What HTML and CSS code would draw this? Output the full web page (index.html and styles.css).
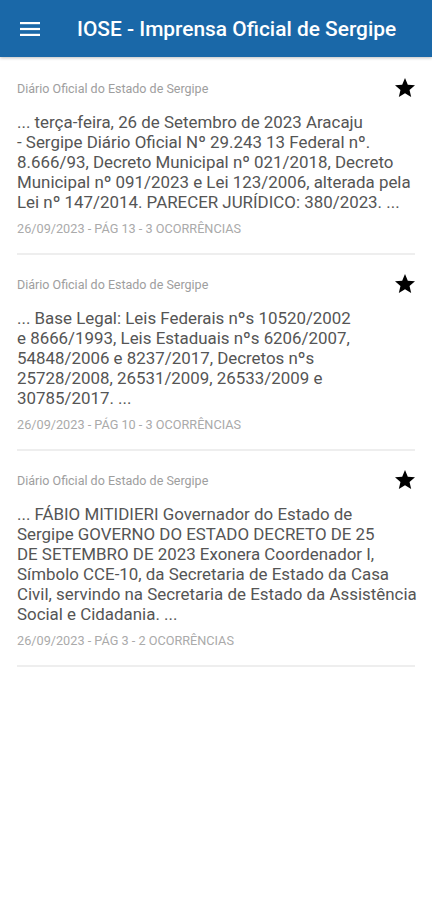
FILE: index.html
```html
<!DOCTYPE html>
<html lang="pt-BR">
<head>
  <meta charset="UTF-8">
  <meta name="viewport" content="width=device-width, initial-scale=1.0">
  <title>IOSE - Imprensa Oficial de Sergipe</title>
  <link rel="stylesheet" href="styles.css">
</head>
<body>
  <header class="app-bar">
    <button class="menu-btn" aria-label="Menu">
      <svg width="20" height="14" viewBox="0 0 20 14">
        <rect x="0" y="0" width="20" height="2.2" fill="#fff"/>
        <rect x="0" y="5.9" width="20" height="2.2" fill="#fff"/>
        <rect x="0" y="11.8" width="20" height="2.2" fill="#fff"/>
      </svg>
    </button>
    <h1 class="app-title">IOSE - Imprensa Oficial de Sergipe</h1>
  </header>

  <main class="results">
    <article class="result">
      <div class="result-head">
        <span class="source">Diário Oficial do Estado de Sergipe</span>
        <svg class="star" width="24" height="24" viewBox="0 0 24 24"><path d="M12 17.27L18.18 21l-1.64-7.03L22 9.24l-7.19-.61L12 2 9.19 8.63 2 9.24l5.46 4.73L5.82 21z"/></svg>
      </div>
      <p class="excerpt">... terça-feira, 26 de Setembro de 2023 Aracaju<br>- Sergipe Diário Oficial Nº 29.243 13 Federal nº.<br>8.666/93, Decreto Municipal nº 021/2018, Decreto<br>Municipal nº 091/2023 e Lei 123/2006, alterada pela<br>Lei nº 147/2014. PARECER JURÍDICO: 380/2023. ...</p>
      <div class="meta">26/09/2023 - Pág 13 - 3 ocorrências</div>
    </article>

    <article class="result">
      <div class="result-head">
        <span class="source">Diário Oficial do Estado de Sergipe</span>
        <svg class="star" width="24" height="24" viewBox="0 0 24 24"><path d="M12 17.27L18.18 21l-1.64-7.03L22 9.24l-7.19-.61L12 2 9.19 8.63 2 9.24l5.46 4.73L5.82 21z"/></svg>
      </div>
      <p class="excerpt">... Base Legal: Leis Federais nºs 10520/2002<br>e 8666/1993, Leis Estaduais nºs 6206/2007,<br>54848/2006 e 8237/2017, Decretos nºs<br>25728/2008, 26531/2009, 26533/2009 e<br>30785/2017. ...</p>
      <div class="meta">26/09/2023 - Pág 10 - 3 ocorrências</div>
    </article>

    <article class="result">
      <div class="result-head">
        <span class="source">Diário Oficial do Estado de Sergipe</span>
        <svg class="star" width="24" height="24" viewBox="0 0 24 24"><path d="M12 17.27L18.18 21l-1.64-7.03L22 9.24l-7.19-.61L12 2 9.19 8.63 2 9.24l5.46 4.73L5.82 21z"/></svg>
      </div>
      <p class="excerpt">... FÁBIO MITIDIERI Governador do Estado de<br>Sergipe GOVERNO DO ESTADO DECRETO DE 25<br>DE SETEMBRO DE 2023 Exonera Coordenador I,<br>Símbolo CCE-10, da Secretaria de Estado da Casa<br>Civil, servindo na Secretaria de Estado da Assistência<br>Social e Cidadania. ...</p>
      <div class="meta">26/09/2023 - Pág 3 - 2 ocorrências</div>
    </article>
  </main>
</body>
</html>
```

FILE: styles.css
```css
body {
  margin: 0;
  background-color: #fff;
  font-family: Roboto, "Noto Sans", sans-serif;
}

.app-bar {
  display: flex;
  align-items: center;
  height: 57px;
  background-color: #1a68a8;
  box-shadow: 0 1px 3px rgba(0, 0, 0, 0.25);
}

.menu-btn {
  display: flex;
  align-items: center;
  justify-content: center;
  width: 20px;
  height: 20px;
  margin-left: 20px;
  padding: 0;
  background: none;
  border: none;
}

.app-title {
  margin: 0 0 0 37px;
  color: #fff;
  font-size: 20.9px;
  font-weight: 500;
}

.results {
  padding: 2px 14px 0 17px;
}

.result {
  padding: 18px 0 17px;
  border-bottom: 2px solid #eee;
  margin-right: 3px;
}

.result-head {
  display: flex;
  justify-content: space-between;
  align-items: center;
  height: 22px;
}

.source {
  color: #9e9e9e;
  font-size: 12.5px;
}

.star {
  margin-right: -2px;
  fill: #000;
}

.excerpt {
  margin: 13px -3px 0 0;
  color: #555;
  font-size: 16.9px;
  line-height: 20px;
}

.meta {
  margin-top: 9px;
  color: #aaa;
  font-size: 12.7px;
  line-height: 15px;
  text-transform: uppercase;
}
```
